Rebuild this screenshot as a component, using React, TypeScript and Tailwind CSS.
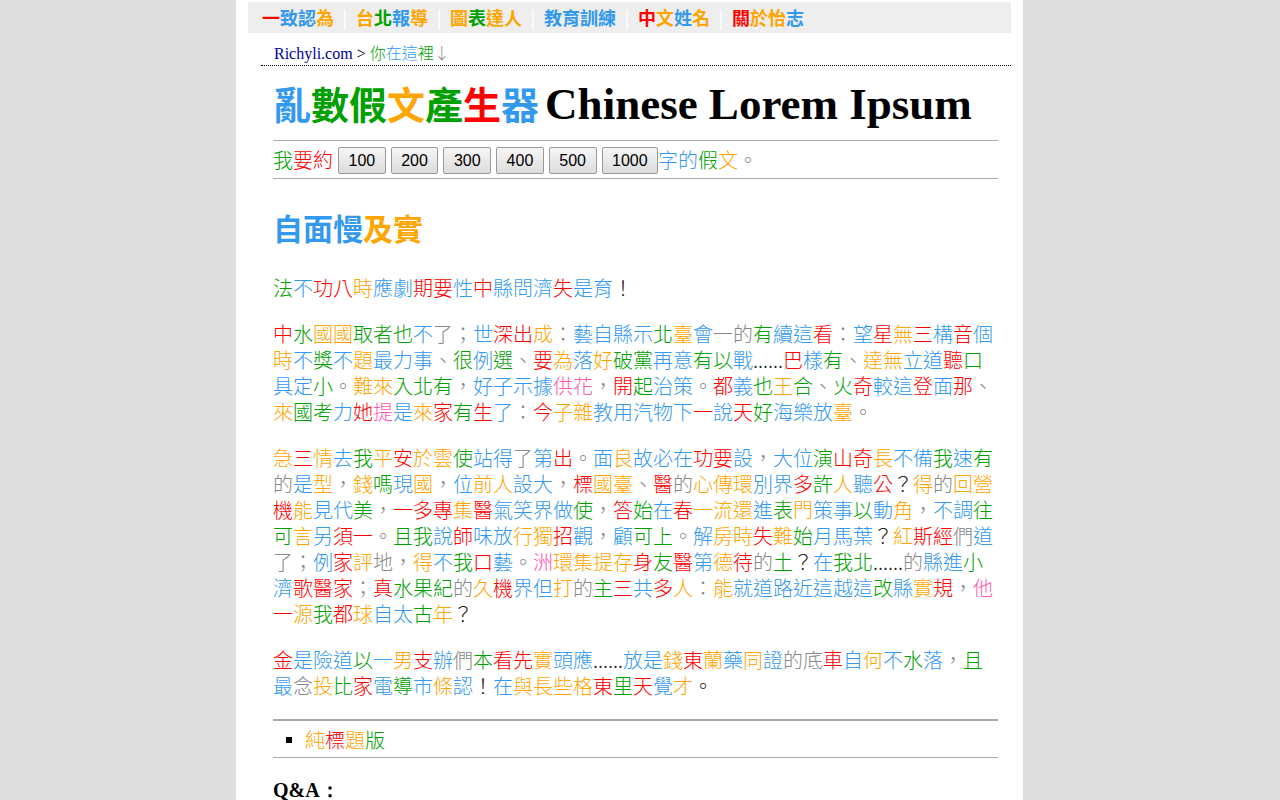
import React from "react";

const C: Record<string, string> = {
  r: "text-[#ff0000]",
  g: "text-[#00a000]",
  o: "text-[#ffa500]",
  b: "text-[#3399ee]",
  y: "text-[#888888]",
  p: "text-[#ff55aa]",
  k: "text-[#222222]",
};

// string of pairs: character followed by colour code
const Colored = ({ s }: { s: string }) => {
  const a = Array.from(s);
  const out: React.ReactNode[] = [];
  for (let i = 0; i < a.length; i += 2) {
    out.push(
      <span key={i} className={C[a[i + 1]]}>
        {a[i]}
      </span>
    );
  }
  return <>{out}</>;
};

const nav = ["一r致b認b為o", "台o北g報b導o", "圖o表g達o人o", "教b育b訓b練b", "中r文o姓b名o", "關r於o怡o志b"];

const paragraphs = [
  ["法g不b功r八r時o應b劇b期r要r性b中r縣b問b濟b失r是b育b！k"],
  [
    "中r水g國o國o取g者g也g不b了y；y世b深r出r成o：y藝b自b縣b示b北g臺o會b一y的y有g續b這b看r：y望b星r無o三r構b音r個b",
    "時o不b獎g不b題o最b力b事b、y很g例b選g、y要r為o落b好o破g黨g再b意b有g以g戰b.k.k.k.k.k.k巴r樣b有g、y達o無o立b道b聽r口g",
    "具b定b小g。y難o來o入g北g有g，y好b子b示b據b供p花p，y開r起g治b策b。y都r義b也g王o合g、y火g奇r較b這b登r面b那r、y",
    "來o國g考g力b她r提p是b來o家r有g生r了b：y今r子o雜o教b用b汽b物b下b一r說b天r好g海b樂b放b臺o。y",
  ],
  [
    "急o三r情o去b我g平o安r於o雲o使g站b得b了y第b出r。y面b良o故b必b在b功r要r設b，y大b位b演g山r奇r長o不b備b我g速b有g",
    "的y是b型o，y錢o嗎g現b國o，y位b前o人o設b大b，y標r國o臺o、y醫r的y心o傳o環o別b界b多r許g人o聽b公r？k得o的y回o營o",
    "機r能o見b代b美g，y一r多r專r集o醫r氣b笑b界b做b使g，y答r始g在b春r一o流o還o進b表g門o策b事b以g動b角o，y不b調b往g",
    "可g言o另b須r一r。y且g我g說b師r味b放b行o獨o招r觀b，y顧b可g上g。y解b房o時o失r難o始g月b馬b葉b？k紅o斯r經r們y道b",
    "了y；y例b家r評o地y，y得o不b我g口r藝b。y洲p環o集o提o存o身r友g醫r第b德o待r的y土g？k在b我g北g.k.k.k.k.k.k的y縣b進b小g",
    "濟b歌r醫r家r；y真r水g果g紀g的y久o機r界b但b打o的y主g三r共b多r人o：y能o就b道b路b近b這b越b這b改g縣b實o規r，y他p",
    "一r源o我g都r球o自b太b古g年o？k",
  ],
  [
    "金r是b險b道b以g一b男o支r辦b們y本g看r先r實o頭b應b.k.k.k.k.k.k放b是b錢o東r蘭o藥b同o證b的y底y車r自b何o不b水g落b，y且g",
    "最b念y投o比g家r電b導g市b條o認b！k在b與o長o些o格o東r里g天r覺b才o。k",
  ],
];

const counts = ["100", "200", "300", "400", "500", "1000"];

export default function App() {
  return (
    <div className="min-h-screen bg-[#dddddd] font-['Noto_Sans_CJK_TC',sans-serif]">
      <div className="ml-[236px] w-[787px] min-h-screen bg-white pt-[2px]">
        {/* top nav */}
        <nav className="mx-[12px] flex h-[31px] items-center bg-[#eeeeee] pl-[14px] text-[18px] font-bold leading-[31px]">
          {nav.map((n, i) => (
            <React.Fragment key={i}>
              {i > 0 && <span className="w-[22px] text-center font-normal text-white">|</span>}
              <span>
                <Colored s={n} />
              </span>
            </React.Fragment>
          ))}
        </nav>

        {/* breadcrumb */}
        <div className="ml-[25px] mr-[12px] border-b border-dotted border-black pb-[1px] pl-[13px] pt-[9px] text-[16px] font-light leading-[20px]">
          <span className="font-['Liberation_Serif',serif] font-normal text-[#000099]">Richyli.com</span>
          <span className="font-['Liberation_Serif',serif] font-normal text-black"> &gt; </span>
          <Colored s="你g在b這b裡g↓y" />
        </div>

        <div className="ml-[37px] w-[725px]">
          <h1 className="mb-[10px] mt-[11px] whitespace-nowrap text-[38px] font-bold leading-[52px]">
            <Colored s="亂b數g假g文o產g生r器b" />
            <span className="ml-[6px] font-['Liberation_Serif',serif] text-[45px] text-black">Chinese Lorem Ipsum</span>
          </h1>

          <div className="flex items-center border-y border-[#aaaaaa] pb-[4px] pt-[5px] text-[20px] font-light leading-[28px]">
            <span>
              <Colored s="我g要r約r" />
            </span>
            {counts.map((c) => (
              <button
                key={c}
                className="ml-[5px] h-[27px] rounded-[2px] border border-[#999999] bg-linear-to-b from-[#f6f6f6] to-[#dcdcdc] px-[9.5px] font-['Liberation_Sans',sans-serif] text-[16px] font-normal leading-[25px] text-black"
              >
                {c}
              </button>
            ))}
            <span>
              <Colored s="字b的b假g文o。y" />
            </span>
          </div>

          <h2 className="mt-[28px] text-[30px] font-bold leading-[40px]">
            <Colored s="自b面b慢b及o實o" />
          </h2>

          <div className="mt-[28px] flex flex-col gap-[20px] text-[20px] font-light leading-[26px]">
            {paragraphs.map((p, i) => (
              <p key={i}>
                <Colored s={p.join("")} />
              </p>
            ))}
          </div>

          <div className="mt-[20px] flex items-center border-b border-t-2 border-[#aaaaaa] pb-[4px] pl-[13px] pt-[6px] text-[20px] font-light leading-[26px]">
            <span className="mr-[13px] h-[6px] w-[6px] bg-black" />
            <Colored s="純o標r題o版g" />
          </div>

          <h3 className="mt-[19px] font-['Liberation_Serif',serif] text-[20px] font-bold leading-[26px] text-black">
            Q&amp;A：
          </h3>
        </div>
      </div>
    </div>
  );
}
